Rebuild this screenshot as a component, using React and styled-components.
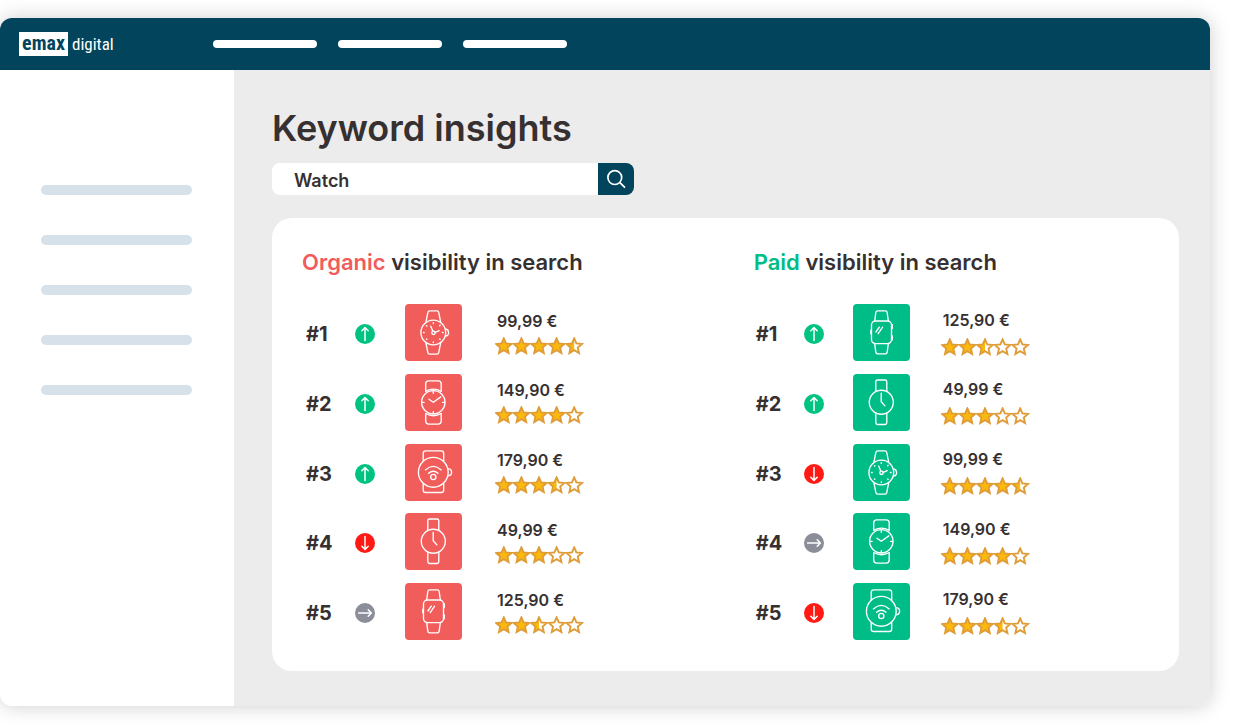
import React from "react";
import styled, { createGlobalStyle } from "styled-components";

const colors = {
  navy: "#02445c",
  text: "#373031",
  canvas: "#ececec",
  bar: "#d7e1e9",
  organic: "#f15d5b",
  paid: "#00bd87",
  up: "#00c281",
  down: "#ff1a14",
  same: "#8b8e98",
};

const GlobalStyle = createGlobalStyle`
  * { box-sizing: border-box; }
  body {
    margin: 0;
    background: #fff;
    color: ${colors.text};
    font-family: Inter, "Liberation Sans", sans-serif;
  }
`;

const Page = styled.div`
  min-height: 100vh;
  padding: 18px 36px 18px 0;
  display: flex;
`;

const Window = styled.div`
  flex: 1;
  display: flex;
  flex-direction: column;
  border-radius: 12px;
  overflow: hidden;
  background: #fff;
  box-shadow: 0 0 20px rgba(0, 0, 0, 0.2);
`;

const Header = styled.header`
  height: 52px;
  display: flex;
  align-items: center;
  background: ${colors.navy};
`;

const Brand = styled.a`
  width: 213px;
  padding-left: 19px;
  display: flex;
  align-items: center;
  gap: 4px;
  color: #fff;
  text-decoration: none;
  font-family: "Liberation Sans Narrow", "Roboto Condensed", "Liberation Sans", sans-serif;
  font-size: 17px;
  line-height: 24px;
`;

const BrandMark = styled.span`
  width: 49px;
  height: 24px;
  line-height: 22px;
  text-align: center;
  background: #fff;
  color: ${colors.navy};
  font-size: 20px;
  font-weight: 700;
`;

const TopNav = styled.nav`
  display: flex;
  gap: 21px;
`;

const TopLink = styled.a`
  width: 104px;
  height: 8px;
  border-radius: 4px;
  background: #fff;
`;

const Body = styled.div`
  flex: 1;
  display: flex;
`;

const Sidebar = styled.nav`
  width: 234px;
  padding: 115px 42px 40px 41px;
  display: flex;
  flex-direction: column;
  gap: 40px;
`;

const SideLink = styled.a`
  height: 10px;
  border-radius: 5px;
  background: ${colors.bar};
`;

const Main = styled.main`
  flex: 1;
  display: flex;
  flex-direction: column;
  padding: 36px 31px 35px 38px;
  background: ${colors.canvas};
`;

const Title = styled.h1`
  margin: 0;
  font-size: 36px;
  line-height: 44px;
  font-weight: 600;
`;

const Search = styled.form`
  display: flex;
  width: 100%;
  max-width: 362px;
  height: 32px;
  margin-top: 13px;
  border-radius: 8px;
  overflow: hidden;
`;

const SearchInput = styled.input`
  flex: 1;
  min-width: 0;
  border: 0;
  padding: 3px 22px 0;
  background: #fff;
  color: ${colors.text};
  font-family: inherit;
  font-size: 18px;
  font-weight: 600;
`;

const SearchButton = styled.button`
  width: 36px;
  border: 0;
  padding: 0;
  display: flex;
  align-items: center;
  justify-content: center;
  background: ${colors.navy};
`;

const Card = styled.div`
  flex: 1;
  display: grid;
  grid-template-columns: 8fr 7fr;
  margin-top: 23px;
  padding: 29px 30px 31px;
  border-radius: 20px;
  background: #fff;
`;

const Panel = styled.section`
  display: flex;
  flex-direction: column;
`;

const PanelTitle = styled.h2`
  margin: 0;
  font-size: 22px;
  line-height: 30px;
  font-weight: 600;
`;

const Accent = styled.span`
  color: ${(p) => p.$color};
`;

const Ranking = styled.ol`
  flex: 1;
  list-style: none;
  margin: 27px 0 0;
  padding: 0 0 0 ${(p) => (p.$tight ? 2 : 4)}px;
  display: flex;
  flex-direction: column;
  justify-content: space-between;
`;

const Row = styled.li`
  display: grid;
  grid-template-columns: ${(p) => (p.$tight ? "48px 49px 88px auto" : "49px 50px 90px auto")};
  align-items: center;
  height: 57px;
`;

const Rank = styled.span`
  padding-top: 3px;
  font-size: 20px;
  line-height: 24px;
  font-weight: 700;
`;

const TrendDot = styled.span`
  width: 20px;
  height: 20px;
  margin-top: 3px;
  border-radius: 50%;
  display: flex;
  background: ${(p) => p.$color};
`;

const Tile = styled.span`
  width: 57px;
  height: 57px;
  border-radius: 4px;
  display: flex;
  background: ${(p) => p.$color};
`;

const Offer = styled.div`
  display: flex;
  flex-direction: column;
  gap: ${(p) => (p.$tight ? 8 : 6)}px;
  padding: 0 2px;
`;

const Price = styled.span`
  font-size: 16px;
  line-height: 20px;
  font-weight: 600;
`;

const Rating = styled.svg`
  display: block;
  margin-left: -2px;
`;

const turns = { up: 0, same: 90, down: 180 };
const trendNames = { up: "Rising", same: "Unchanged", down: "Falling" };

function Trend({ kind }) {
  return (
    <TrendDot $color={colors[kind]} role="img" aria-label={trendNames[kind]}>
      <svg width="20" height="20" viewBox="0 0 20 20" fill="none" stroke="#fff" strokeWidth="1.5" strokeLinecap="round" strokeLinejoin="round">
        <path transform={`rotate(${turns[kind]} 10 10)`} d="M10 16.4V3.8M6.8 6.8 10 3.6l3.2 3.2" />
      </svg>
    </TrendDot>
  );
}

const watches = {
  classic: (
    <>
      <circle cx="28.3" cy="28.5" r="12.4" />
      <path d="M20.9 18.4 22.8 8.7q.3-1.8 2-1.8h7q1.7 0 2 1.8l1.9 9.7M20.9 38.6l1.9 9.7q.3 1.8 2 1.8h7q1.7 0 2-1.8l1.9-9.7" />
      <path d="m40.3 25 2.3.6q2 2.9 0 5.9l-2.3.6" />
      <circle cx="28.5" cy="28.8" r="1.7" />
      <path d="m27.8 27.2-2-5M30.2 28.4l4-1.7" />
      <path d="M28.3 18.7v.7M28.3 37.8v.7M18.5 28.5h.7M37.4 28.5h.7M21.5 21.7l.4.4M34.7 21.7l.4-.4M21.5 35.3l.4-.4M34.7 35l.4.4" />
    </>
  ),
  dress: (
    <>
      <circle cx="28.3" cy="28.3" r="11.7" />
      <path d="M20.7 17.4V9.8q0-3 3-3h9.500q3 0 3 3v7.600q-7.800-4.500-15.500 0ZM20.700 39.500v7.600q0 3 3 3h9.500q3 0 3-3v-7.600q-7.800 4.500-15.500 0Z" />
      <path d="M28.300 17v2.200M28.300 37.600v2M17 28.300h2.200M37.500 28.300h2.200M24 25.200l4.300 3 7.500-5.300" />
    </>
  ),
  smart: (
    <>
      <circle cx="28.3" cy="28.3" r="14.9" />
      <path d="M18.2 17V9.5q0-2.6 2.6-2.6h15.300q2.600 0 2.600 2.600V17M18.200 39.600v6.300q0 2.600 2.600 2.600h15.300q2.600 0 2.600-2.600v-6.300M43.300 24.700q3.300.5 3.300 3.600t-3.300 3.600" />
      <circle cx="28.3" cy="33" r="2.6" />
      <path d="M20.400 25.900q7.900-7 15.800 0M23.600 29.300q4.700-4 9.400 0" />
    </>
  ),
  slim: (
    <>
      <circle cx="28.3" cy="28.2" r="12" />
      <path d="M22.8 17.5V7.8q0-1.8 1.8-1.8h7.4q1.8 0 1.8 1.8v9.7M22.800 39v9.700q0 1.800 1.800 1.800h7.400q1.800 0 1.800-1.800V39M28.200 19.200v8.500l3.700 4.200" />
    </>
  ),
  square: (
    <>
      <rect x="18.5" y="17" width="20" height="22.6" rx="4" />
      <path d="m21.7 17 1.1-8.5q.2-1.7 2-1.7h7.4q1.800 0 2 1.700l1.100 8.500M21.700 39.600l1.100 8.500q.2 1.700 2 1.700h7.400q1.800 0 2-1.700l1.100-8.500" />
      <path d="M39.300 20.600v4M39.300 32v3.800M17.800 26.200v3.600M22.900 28l3.400-4.900M25.200 29.600l4.400-6.400" />
    </>
  ),
};

function Watch({ kind, color }) {
  return (
    <Tile $color={color}>
      <svg width="57" height="57" viewBox="0 0 57 57" fill="none" stroke="#fff" strokeWidth="1.35" strokeLinecap="round" strokeLinejoin="round" role="img" aria-label={`${kind} watch`}>
        {watches[kind]}
      </svg>
    </Tile>
  );
}

const starPath = "M8.8 1.4 11 6.400l5.500.6-4.100 3.600 1.200 5.400-4.800-2.800L4 16l1.200-5.400L1.100 7l5.500-.6Z";
const halfPath = "M8.8 1.4V13.200L4 16l1.200-5.400L1.100 7l5.500-.6Z";

function Stars({ value }) {
  return (
    <Rating width="89" height="18" viewBox="0 0 89 18" role="img" aria-label={`${value} out of 5 stars`}>
      {[0, 1, 2, 3, 4].map((i) => (
        <g key={i} transform={`translate(${i * 17.6} 0)`}>
          <path d={starPath} fill={value >= i + 1 ? "#fbb90b" : "#fff"} />
          {value === i + 0.5 && <path d={halfPath} fill="#fbb90b" />}
          <path d={starPath} fill="none" stroke="#df9c37" strokeWidth="1.9" />
        </g>
      ))}
    </Rating>
  );
}

const organic = [
  { trend: "up", watch: "classic", price: "99,99 €", stars: 4.5 },
  { trend: "up", watch: "dress", price: "149,90 €", stars: 4 },
  { trend: "up", watch: "smart", price: "179,90 €", stars: 3.5 },
  { trend: "down", watch: "slim", price: "49,99 €", stars: 3 },
  { trend: "same", watch: "square", price: "125,90 €", stars: 2.5 },
];

const paid = [
  { trend: "up", watch: "square", price: "125,90 €", stars: 2.5 },
  { trend: "up", watch: "slim", price: "49,99 €", stars: 3 },
  { trend: "down", watch: "classic", price: "99,99 €", stars: 4.5 },
  { trend: "same", watch: "dress", price: "149,90 €", stars: 4 },
  { trend: "down", watch: "smart", price: "179,90 €", stars: 3.5 },
];

function Visibility({ name, color, items, tight }) {
  return (
    <Panel>
      <PanelTitle>
        <Accent $color={color}>{name}</Accent> visibility in search
      </PanelTitle>
      <Ranking $tight={tight}>
        {items.map((item, i) => (
          <Row key={item.watch} $tight={tight}>
            <Rank>#{i + 1}</Rank>
            <Trend kind={item.trend} />
            <Watch kind={item.watch} color={color} />
            <Offer $tight={tight}>
              <Price>{item.price}</Price>
              <Stars value={item.stars} />
            </Offer>
          </Row>
        ))}
      </Ranking>
    </Panel>
  );
}

export default function App() {
  return (
    <Page>
      <GlobalStyle />
      <Window>
        <Header>
          <Brand href="#home">
            <BrandMark>emax</BrandMark>
            <span>digital</span>
          </Brand>
          <TopNav aria-label="Main">
            {[1, 2, 3].map((n) => (
              <TopLink key={n} href={`#area-${n}`} aria-label={`Area ${n}`} />
            ))}
          </TopNav>
        </Header>
        <Body>
          <Sidebar aria-label="Sections">
            {[1, 2, 3, 4, 5].map((n) => (
              <SideLink key={n} href={`#section-${n}`} aria-label={`Section ${n}`} />
            ))}
          </Sidebar>
          <Main>
            <Title>Keyword insights</Title>
            <Search role="search" onSubmit={(e) => e.preventDefault()}>
              <SearchInput type="text" aria-label="Keyword" defaultValue="Watch" />
              <SearchButton type="submit" aria-label="Search">
                <svg width="20" height="20" viewBox="0 0 20 20" fill="none" stroke="#fff" strokeWidth="1.7" strokeLinecap="round">
                  <circle cx="8.8" cy="8.6" r="6.9" />
                  <path d="m13.9 13.7 4.6 4.5" />
                </svg>
              </SearchButton>
            </Search>
            <Card>
              <Visibility name="Organic" color={colors.organic} items={organic} />
              <Visibility name="Paid" color={colors.paid} items={paid} tight />
            </Card>
          </Main>
        </Body>
      </Window>
    </Page>
  );
}
